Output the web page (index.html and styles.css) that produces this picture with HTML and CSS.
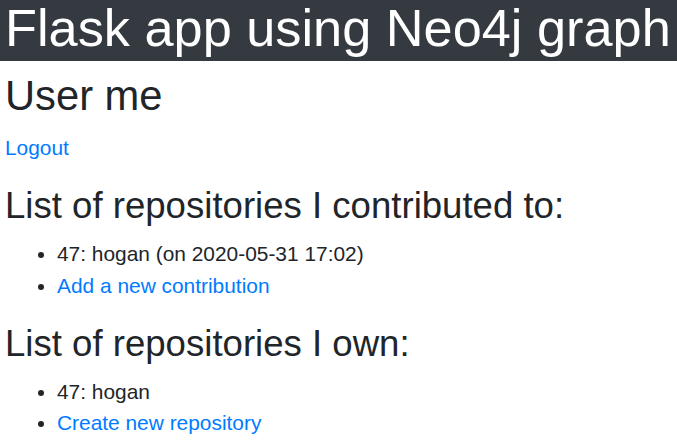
FILE: index.html
```html
<!DOCTYPE html>
<html lang="en">
<head>
<meta charset="utf-8">
<title>Flask app using Neo4j graph</title>
<link rel="stylesheet" href="styles.css">
</head>
<body>
<header class="topbar">
  <h1 class="brand">Flask app using Neo4j graph</h1>
</header>
<main class="content">
  <h2 class="title">User me</h2>
  <p class="para"><a class="link" href="#">Logout</a></p>
  <h3 class="section">List of repositories I contributed to:</h3>
  <ul class="list">
    <li>47: hogan (on 2020-05-31 17:02)</li>
    <li><a class="link" href="#">Add a new contribution</a></li>
  </ul>
  <h3 class="section">List of repositories I own:</h3>
  <ul class="list">
    <li>47: hogan</li>
    <li><a class="link" href="#">Create new repository</a></li>
  </ul>
</main>
</body>
</html>
```

FILE: styles.css
```css
html, body {
  margin: 0;
  padding: 0;
  background: #fff;
}
body {
  font-family: "Liberation Sans", Arial, sans-serif;
  font-size: 20.9px;
  line-height: 1.5;
  color: #212529;
}
.topbar {
  background: #343a40;
  color: #fff;
  margin-bottom: 10.4px;
  padding: 0 5px 4px 5px;
}
.brand {
  margin: 0;
  font-size: 52.3px;
  font-weight: 400;
  line-height: 57px;
}
.content {
  padding: 0 5px;
}
.title {
  margin: 0 0 10.4px;
  font-size: 41.7px;
  font-weight: 400;
  line-height: 1.2;
}
.section {
  margin: 0 0 10.4px;
  font-size: 36.6px;
  font-weight: 400;
  line-height: 1.2;
}
.para {
  margin: 0 0 20.8px;
}
.list {
  margin: 0 0 20.8px;
  padding-left: 52px;
}
.link {
  color: #007bff;
  text-decoration: none;
}
```
